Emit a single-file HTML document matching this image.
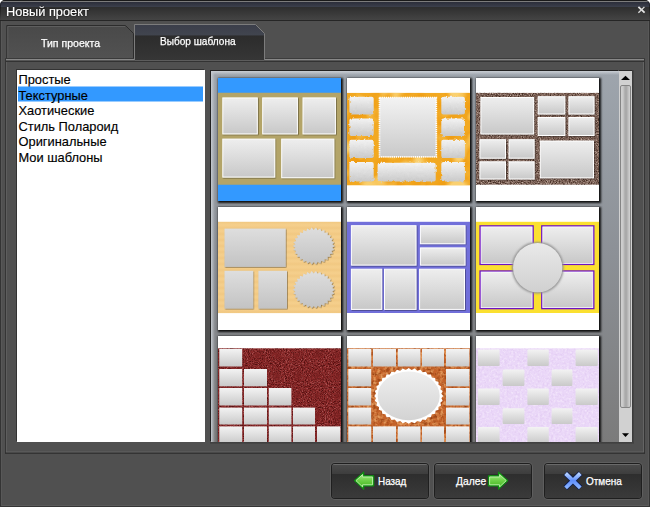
<!DOCTYPE html>
<html><head><meta charset="utf-8">
<style>
html,body{margin:0;padding:0;}
html{background:#fff;}
body{width:650px;height:507px;overflow:hidden;background:#fff;font-family:"Liberation Sans",sans-serif;position:relative;}
#win{position:absolute;left:0;top:0;width:650px;height:507px;overflow:hidden;background:#505050;border-radius:5px 5px 0 0;}
#edge{position:absolute;left:0;top:0;width:648px;height:30px;border:1px solid rgba(0,0,0,.4);border-bottom:none;border-radius:5px 5px 0 0;z-index:9;-webkit-mask-image:linear-gradient(#000 0,#000 6px,transparent 21px);}
.abs{position:absolute;}
#titlebar{left:0;top:0;width:650px;height:21px;background:linear-gradient(#2a2a2a 0,#2a2a2a 1px,#7c7c7c 1px,#7c7c7c 2px,#2b2d39 2px,#3a3e4a 6.5px,#2e2e2e 7px,#444 19.8px,#262626 20px,#262626 21px);}
#title{left:6.3px;top:4px;font-size:13px;color:#fff;-webkit-text-stroke:0.2px #fff;text-shadow:0 0 2px #000,0 0 1px #000;line-height:16px;white-space:nowrap;transform:scaleX(.982);transform-origin:0 0;}
#list{left:17px;top:70px;width:188px;height:372px;background:#fff;box-shadow:-1px -1px 0 0 #333;}
.li{position:absolute;left:1px;width:185px;height:15px;font-size:13px;line-height:15px;color:#000;white-space:nowrap;}
.li span{display:inline-block;transform:translateY(.6px) scaleX(.988);transform-origin:0 0;padding-left:0.5px;-webkit-text-stroke:0.15px #000;}
.sel{background:linear-gradient(rgba(51,153,255,.5) 0,rgba(51,153,255,.5) 1px,#3399ff 1px,#3399ff 15px,rgba(51,153,255,.5) 15px,rgba(51,153,255,.5) 16px);height:16px !important;margin-top:-1px;}
.sel span{margin-top:1px}
#panel{left:211px;top:71px;width:408px;height:371px;background:linear-gradient(#9ea5ad,#8c9096 50%,#7b7b7b);overflow:hidden;box-shadow:-1px -1px 0 0 #222;}
#panel:before{content:"";position:absolute;left:0;top:0;right:0;height:4px;background:linear-gradient(#c9ced4,rgba(201,206,212,0));}
#panel:after{content:"";position:absolute;left:0;top:0;bottom:0;width:4px;background:linear-gradient(90deg,#c4c9cf,rgba(196,201,207,0));}
.th{position:absolute;width:123px;height:123px;background:#fff;box-shadow:1px 1px 2px 1px rgba(0,0,0,.9);z-index:2;}
.th svg{display:block}
.btn{position:absolute;top:464px;height:34px;border-radius:3px;background:linear-gradient(#6a6a6a 0,#6a6a6a 1px,#4a4a4a 1px,#3d3d3d 10px,#2e2e2e 10.5px,#3a3a3a 100%);box-shadow:0 0 0 1px #1f1f1f, 0 0 0 2px #5e5e5e;}
.btn span{position:absolute;top:10px;font-size:11px;line-height:14px;color:#fff;white-space:nowrap;-webkit-text-stroke:0.25px #fff;transform:translateY(.4px) scaleX(.91);transform-origin:0 0;}
.tab{position:absolute;font-size:11px;color:#fff;white-space:nowrap;-webkit-text-stroke:0.25px #fff;}
#sb{left:619px;top:71px;width:13px;height:371px;background:#d1d1d1;box-shadow:0 -1px 0 0 #2a2a2a;}
#sbthumb{left:1px;top:14px;width:9px;height:321px;border:1px solid #858585;background:linear-gradient(90deg,#cfcfcf 0,#cacaca 2px,#aaaaaa 4px,#aaaaaa 5.5px,#c8c8c8 8px,#d2d2d2 9px);border-radius:2px;}
</style></head><body><div id="win">
<div id="titlebar" class="abs"></div>
<div id="title" class="abs">Новый проект</div>
<svg class="abs" style="left:0;top:0" width="650" height="507" viewBox="0 0 650 507">
<defs>
<linearGradient id="t1" x1="0" y1="0" x2="0" y2="1"><stop offset="0" stop-color="#494949"/><stop offset="1" stop-color="#525252"/></linearGradient>
<linearGradient id="t2" x1="0" y1="0" x2="0" y2="1"><stop offset="0" stop-color="#3b3e4a"/><stop offset="0.30" stop-color="#41454f"/><stop offset="0.31" stop-color="#2c2c2c"/><stop offset="1" stop-color="#363636"/></linearGradient>
</defs>
<!-- close x -->
<path d="M638.4 6.9 L644.6 12.7" stroke="#e6e6e6" stroke-width="1.8" fill="none"/><path d="M644.4 6.9 L638.4 12.7" stroke="#dcdcdc" stroke-width="1.3" fill="none"/>
<!-- window edges -->
<rect x="0" y="21" width="1" height="486" fill="#343434"/>
<rect x="1" y="21" width="1" height="485" fill="#585858"/>
<rect x="649" y="21" width="1" height="486" fill="#333"/>
<rect x="648" y="21" width="1" height="485" fill="#585858"/>
<rect x="0" y="506" width="650" height="1" fill="#353535"/>
<rect x="2" y="505" width="646" height="1" fill="#5a5a5a"/>
<!-- tab1 -->
<path d="M6.8 59 V25.5 H125.5 L133.5 33.5 V59 Z" fill="url(#t1)" stroke="#2c2c2c" stroke-width="1"/>
<path d="M7.8 58 V26.5 H125" fill="none" stroke="#5e5e5e" stroke-width="1"/>
<!-- tab2 -->
<path d="M134.5 60.5 V24.5 H255.5 L264.5 33.5 V60.5 Z" fill="url(#t2)" stroke="#7c7c7c" stroke-width="1"/>
<!-- frame -->
<rect x="5" y="58" width="129" height="1" fill="#3a3a3a"/>
<rect x="265" y="58" width="380" height="1" fill="#3c3c3c"/>
<rect x="6" y="59" width="128" height="1.6" fill="#888"/>
<rect x="265" y="59" width="379.4" height="1.6" fill="#888"/>
<rect x="5" y="60.6" width="640" height="1.3" fill="#303030"/>
<rect x="5" y="59" width="1" height="394.5" fill="#353535"/>
<rect x="6" y="62" width="1" height="390" fill="#5e5e5e"/>
<rect x="643" y="62" width="1" height="390" fill="#646464"/>
<rect x="644" y="59" width="1" height="394.5" fill="#353535"/>
<rect x="6" y="451.6" width="638" height="1" fill="#666"/>
<rect x="5" y="452.6" width="640" height="1.2" fill="#2e2e2e"/>
</svg>
<div class="tab" id="tab1t" style="left:41px;top:36px;line-height:14px;transform:scaleX(.957);transform-origin:0 0;">Тип проекта</div>
<div class="tab" id="tab2t" style="left:160px;top:34px;line-height:14px;transform:scaleX(.917);transform-origin:0 0;">Выбор шаблона</div>

<div id="list" class="abs">
<div class="li" style="top:1px"><span>Простые</span></div>
<div class="li sel" style="top:17px"><span>Текстурные</span></div>
<div class="li" style="top:32px"><span>Хаотические</span></div>
<div class="li" style="top:48px"><span>Стиль Полароид</span></div>
<div class="li" style="top:63px"><span>Оригинальные</span></div>
<div class="li" style="top:79px"><span>Мои шаблоны</span></div>
</div>

<svg width="0" height="0" style="position:absolute"><defs>
<linearGradient id="cg" x1="0" y1="0" x2="0" y2="1"><stop offset="0" stop-color="#eeeeee"/><stop offset="1" stop-color="#c8c8c8"/></linearGradient>
<linearGradient id="kg" x1="0" y1="0" x2="0" y2="1"><stop offset="0" stop-color="#f3f3f3"/><stop offset="1" stop-color="#c9c9c9"/></linearGradient>
<linearGradient id="gg" x1="0" y1="0" x2="0" y2="1"><stop offset="0" stop-color="#dedede"/><stop offset="1" stop-color="#c3c3c3"/></linearGradient>
<linearGradient id="eg" x1="0" y1="0" x2="0" y2="1"><stop offset="0" stop-color="#efefef"/><stop offset="1" stop-color="#d3d3d3"/></linearGradient>
<linearGradient id="gg2" x1="0" y1="0" x2="0" y2="1"><stop offset="0" stop-color="#e9e9e9"/><stop offset="1" stop-color="#d0d0d0"/></linearGradient>
<radialGradient id="og" cx="0.5" cy="0.5" r="0.7"><stop offset="0" stop-color="#fbd27a" stop-opacity=".55"/><stop offset="1" stop-color="#f1a51e" stop-opacity="0"/></radialGradient>
<filter id="cs" x="-10%" y="-10%" width="125%" height="125%"><feDropShadow dx="0.7" dy="0.7" stdDeviation="0.6" flood-color="#000" flood-opacity=".45"/></filter>
<filter id="b1"><feGaussianBlur stdDeviation="0.8"/></filter>
<filter id="speck" color-interpolation-filters="sRGB" x="0" y="0" width="100%" height="100%"><feTurbulence type="fractalNoise" baseFrequency="0.9" numOctaves="2" seed="3" result="n"/><feColorMatrix in="n" type="matrix" values="0 0 0 0 0.235  0 0 0 0 0.149  0 0 0 0 0.110  3 0 0 0 -1.3" result="d"/><feColorMatrix in="n" type="matrix" values="0 0 0 0 0.769  0 0 0 0 0.690  0 0 0 0 0.643  0 3 0 0 -1.5" result="l"/><feMerge result="m"><feMergeNode in="SourceGraphic"/><feMergeNode in="d"/><feMergeNode in="l"/></feMerge><feComposite in="m" in2="SourceGraphic" operator="in"/></filter>
<filter id="speck2" color-interpolation-filters="sRGB" x="0" y="0" width="100%" height="100%"><feTurbulence type="fractalNoise" baseFrequency="0.95" numOctaves="2" seed="11" result="n"/><feColorMatrix in="n" type="matrix" values="0 0 0 0 0.306  0 0 0 0 0.055  0 0 0 0 0.055  3 0 0 0 -1.3" result="d"/><feColorMatrix in="n" type="matrix" values="0 0 0 0 0.706  0 0 0 0 0.353  0 0 0 0 0.353  0 3 0 0 -1.55" result="l"/><feMerge result="m"><feMergeNode in="SourceGraphic"/><feMergeNode in="d"/><feMergeNode in="l"/></feMerge><feComposite in="m" in2="SourceGraphic" operator="in"/></filter>
<filter id="speck3" color-interpolation-filters="sRGB" x="0" y="0" width="100%" height="100%"><feTurbulence type="fractalNoise" baseFrequency="0.3" numOctaves="2" seed="5" result="n"/><feColorMatrix in="n" type="matrix" values="0 0 0 0 0.604  0 0 0 0 0.267  0 0 0 0 0.078  3 0 0 0 -1.3" result="d"/><feColorMatrix in="n" type="matrix" values="0 0 0 0 0.890  0 0 0 0 0.604  0 0 0 0 0.361  0 3 0 0 -1.3" result="l"/><feMerge result="m"><feMergeNode in="SourceGraphic"/><feMergeNode in="d"/><feMergeNode in="l"/></feMerge><feComposite in="m" in2="SourceGraphic" operator="in"/></filter>
<filter id="speck4" color-interpolation-filters="sRGB" x="0" y="0" width="100%" height="100%"><feTurbulence type="fractalNoise" baseFrequency="0.45" numOctaves="2" seed="2" result="n"/><feColorMatrix in="n" type="matrix" values="0 0 0 0 0.886  0 0 0 0 0.796  0 0 0 0 0.949  2.5 0 0 0 -1.15" result="d"/><feColorMatrix in="n" type="matrix" values="0 0 0 0 0.953  0 0 0 0 0.902  0 0 0 0 0.984  0 2.5 0 0 -1.15" result="l"/><feMerge result="m"><feMergeNode in="SourceGraphic"/><feMergeNode in="d"/><feMergeNode in="l"/></feMerge><feComposite in="m" in2="SourceGraphic" operator="in"/></filter>
<filter id="blot" color-interpolation-filters="sRGB" x="0" y="0" width="100%" height="100%"><feTurbulence type="fractalNoise" baseFrequency="0.05" numOctaves="2" seed="7" result="n"/><feColorMatrix in="n" type="matrix" values="0 0 0 0 0.933  0 0 0 0 0.588  0 0 0 0 0.039  2.6 0 0 0 -1.1" result="d"/><feColorMatrix in="n" type="matrix" values="0 0 0 0 0.980  0 0 0 0 0.816  0 0 0 0 0.439  0 4 0 0 -2.0" result="l"/><feMerge result="m"><feMergeNode in="SourceGraphic"/><feMergeNode in="d"/><feMergeNode in="l"/></feMerge><feComposite in="m" in2="SourceGraphic" operator="in"/></filter>
<filter id="b05"><feGaussianBlur stdDeviation="0.35"/></filter>
<linearGradient id="wood" x1="0" y1="0" x2="0" y2="6" gradientUnits="userSpaceOnUse" spreadMethod="repeat"><stop offset="0" stop-color="#e9b96a" stop-opacity=".0"/><stop offset="0.5" stop-color="#e2ad5c" stop-opacity=".22"/><stop offset="1" stop-color="#e9b96a" stop-opacity="0"/></linearGradient>
<filter id="rough" x="-10%" y="-10%" width="120%" height="120%"><feTurbulence type="fractalNoise" baseFrequency="0.35" numOctaves="2" seed="4" result="n"/><feDisplacementMap in="SourceGraphic" in2="n" scale="3" xChannelSelector="R" yChannelSelector="G"/></filter>
<filter id="rough2" x="-10%" y="-10%" width="125%" height="125%"><feTurbulence type="fractalNoise" baseFrequency="0.3" numOctaves="2" seed="9" result="n"/><feDisplacementMap in="SourceGraphic" in2="n" scale="2.2" xChannelSelector="R" yChannelSelector="G" result="d"/><feDropShadow in="d" dx="0.8" dy="0.8" stdDeviation="0.6" flood-color="#000" flood-opacity=".6"/></filter>
</defs></svg>
<div id="panel" class="abs">
<div class="th" style="left:7px;top:7px"><svg width="123" height="123" viewBox="0 0 123 123"><rect width="123" height="123" fill="#3399ff"/><rect x="0" y="14.75" width="123" height="92" fill="#b3a468"/><rect x="4.8" y="19.9" width="34.5" height="36.0" fill="url(#cg)" stroke="#fff" stroke-width="1" filter="url(#cs)" /><rect x="44.7" y="19.9" width="34.7" height="36.0" fill="url(#cg)" stroke="#fff" stroke-width="1" filter="url(#cs)" /><rect x="85.0" y="19.9" width="32.4" height="36.0" fill="url(#cg)" stroke="#fff" stroke-width="1" filter="url(#cs)" /><rect x="4.8" y="61.1" width="51.9" height="38.0" fill="url(#cg)" stroke="#fff" stroke-width="1" filter="url(#cs)" /><rect x="63.7" y="61.1" width="52.1" height="38.6" fill="url(#cg)" stroke="#fff" stroke-width="1" filter="url(#cs)" /></svg></div>
<div class="th" style="left:136px;top:7px"><svg width="123" height="123" viewBox="0 0 123 123"><rect width="123" height="123" fill="#fff"/><rect x="0" y="14.75" width="123" height="92.75" fill="#f2a922" filter="url(#blot)"/><rect x="2.4" y="18.8" width="24.3" height="17.8" fill="url(#kg)" rx="2" filter="url(#rough)"/><rect x="94.3" y="18.8" width="23.6" height="17.8" fill="url(#kg)" rx="2" filter="url(#rough)"/><rect x="2.4" y="40.4" width="24.3" height="17.6" fill="url(#kg)" rx="2" filter="url(#rough)"/><rect x="94.3" y="40.4" width="23.6" height="17.6" fill="url(#kg)" rx="2" filter="url(#rough)"/><rect x="2.4" y="61.8" width="24.3" height="18.3" fill="url(#kg)" rx="2" filter="url(#rough)"/><rect x="94.3" y="61.8" width="23.6" height="18.3" fill="url(#kg)" rx="2" filter="url(#rough)"/><rect x="2.4" y="83.9" width="24.3" height="19.7" fill="url(#kg)" rx="2" filter="url(#rough)"/><rect x="94.3" y="83.9" width="23.6" height="19.7" fill="url(#kg)" rx="2" filter="url(#rough)"/><rect x="30.6" y="84.7" width="58.1" height="18.9" fill="url(#kg)" rx="2" filter="url(#rough)"/><rect x="32.5" y="19.5" width="56.8" height="59.4" fill="url(#kg)" stroke="#fff" stroke-width="1.7" stroke-dasharray="1.3 0.8"/></svg></div>
<div class="th" style="left:265px;top:7px"><svg width="123" height="123" viewBox="0 0 123 123"><rect width="123" height="123" fill="#fff"/><rect x="0" y="14.8" width="123" height="92" fill="#80655a" filter="url(#speck)"/><rect x="4.9" y="19.5" width="52.7" height="36.5" fill="url(#cg)" stroke="#fff" stroke-width="1" filter="url(#cs)" /><rect x="62.2" y="18.7" width="26.6" height="17.3" fill="url(#cg)" stroke="#fff" stroke-width="1" filter="url(#cs)" /><rect x="92.9" y="18.7" width="25.1" height="17.3" fill="url(#cg)" stroke="#fff" stroke-width="1" filter="url(#cs)" /><rect x="62.2" y="39.5" width="26.6" height="18.0" fill="url(#cg)" stroke="#fff" stroke-width="1" filter="url(#cs)" /><rect x="92.9" y="39.5" width="25.1" height="18.0" fill="url(#cg)" stroke="#fff" stroke-width="1" filter="url(#cs)" /><rect x="3.9" y="61.7" width="25.6" height="18.5" fill="url(#cg)" stroke="#fff" stroke-width="1" filter="url(#cs)" /><rect x="33.0" y="61.7" width="25.1" height="18.5" fill="url(#cg)" stroke="#fff" stroke-width="1" filter="url(#cs)" /><rect x="3.9" y="83.8" width="25.6" height="17.2" fill="url(#cg)" stroke="#fff" stroke-width="1" filter="url(#cs)" /><rect x="33.0" y="83.8" width="25.1" height="17.2" fill="url(#cg)" stroke="#fff" stroke-width="1" filter="url(#cs)" /><rect x="64.3" y="63.0" width="53.2" height="36.8" fill="url(#cg)" stroke="#fff" stroke-width="1" filter="url(#cs)" /></svg></div>
<div class="th" style="left:7px;top:136px"><svg width="123" height="123" viewBox="0 0 123 123"><rect width="123" height="123" fill="#fff"/><rect x="0" y="14.8" width="123" height="91.3" fill="#f5cf8c"/><rect x="0" y="14.8" width="123" height="91.3" fill="url(#wood)"/><rect x="6.5" y="21.6" width="61.2" height="38.3" fill="url(#gg)" filter="url(#cs)" filter="url(#rough2)"/><rect x="6.5" y="63.8" width="28.7" height="37.8" fill="url(#gg)" filter="url(#cs)" filter="url(#rough2)"/><rect x="40.4" y="63.8" width="28.6" height="37.8" fill="url(#gg)" filter="url(#cs)" filter="url(#rough2)"/><polygon points="116.70,39.00 114.20,40.68 116.24,42.85 113.39,43.98 114.89,46.52 111.82,47.05 112.71,49.87 109.55,49.77 109.78,52.75 106.67,52.03 106.25,55.02 103.32,53.71 102.26,56.59 99.65,54.75 97.98,57.40 95.80,55.10 93.62,57.40 91.95,54.75 89.34,56.59 88.28,53.71 85.35,55.02 84.93,52.03 81.82,52.75 82.05,49.77 78.89,49.87 79.78,47.05 76.71,46.52 78.21,43.98 75.36,42.85 77.40,40.68 74.90,39.00 77.40,37.32 75.36,35.15 78.21,34.02 76.71,31.48 79.78,30.95 78.89,28.13 82.05,28.23 81.82,25.25 84.93,25.97 85.35,22.98 88.28,24.29 89.34,21.41 91.95,23.25 93.62,20.60 95.80,22.90 97.98,20.60 99.65,23.25 102.26,21.41 103.32,24.29 106.25,22.98 106.67,25.97 109.78,25.25 109.55,28.23 112.71,28.13 111.82,30.95 114.89,31.48 113.39,34.02 116.24,35.15 114.20,37.32" fill="url(#gg)" filter="url(#cs)"/><polygon points="116.70,82.70 114.20,84.40 116.24,86.59 113.39,87.74 114.89,90.31 111.82,90.85 112.71,93.69 109.55,93.61 109.78,96.60 106.67,95.89 106.25,98.89 103.32,97.59 102.26,100.48 99.65,98.64 97.98,101.30 95.80,99.00 93.62,101.30 91.95,98.64 89.34,100.48 88.28,97.59 85.35,98.89 84.93,95.89 81.82,96.60 82.05,93.61 78.89,93.69 79.78,90.85 76.71,90.31 78.21,87.74 75.36,86.59 77.40,84.40 74.90,82.70 77.40,81.00 75.36,78.81 78.21,77.66 76.71,75.09 79.78,74.55 78.89,71.71 82.05,71.79 81.82,68.80 84.93,69.51 85.35,66.51 88.28,67.81 89.34,64.92 91.95,66.76 93.62,64.10 95.80,66.40 97.98,64.10 99.65,66.76 102.26,64.92 103.32,67.81 106.25,66.51 106.67,69.51 109.78,68.80 109.55,71.79 112.71,71.71 111.82,74.55 114.89,75.09 113.39,77.66 116.24,78.81 114.20,81.00" fill="url(#gg)" filter="url(#cs)"/></svg></div>
<div class="th" style="left:136px;top:136px"><svg width="123" height="123" viewBox="0 0 123 123"><rect width="123" height="123" fill="#fff"/><rect x="0" y="14.8" width="123" height="91.2" fill="#716fda"/><rect x="4.4" y="18.7" width="64.6" height="39.4" fill="url(#cg)" stroke="#fff" stroke-width="1" filter="url(#cs)" /><rect x="73.4" y="18.7" width="44.6" height="18.0" fill="url(#cg)" stroke="#fff" stroke-width="1" filter="url(#cs)" /><rect x="73.4" y="40.9" width="44.6" height="17.2" fill="url(#cg)" stroke="#fff" stroke-width="1" filter="url(#cs)" /><rect x="4.4" y="62.2" width="30.3" height="40.2" fill="url(#cg)" stroke="#fff" stroke-width="1" filter="url(#cs)" /><rect x="37.5" y="62.2" width="31.5" height="40.2" fill="url(#cg)" stroke="#fff" stroke-width="1" filter="url(#cs)" /><rect x="72.6" y="62.2" width="44.9" height="40.2" fill="url(#cg)" stroke="#fff" stroke-width="1" filter="url(#cs)" /></svg></div>
<div class="th" style="left:265px;top:136px"><svg width="123" height="123" viewBox="0 0 123 123"><rect width="123" height="123" fill="#fff"/><rect x="0" y="14.8" width="123" height="91.2" fill="#fbe030"/><rect x="3.4" y="18.2" width="54.4" height="39.9" fill="#6d14c2"/><rect x="5.1" y="19.9" width="51.0" height="36.5" fill="url(#cg)" stroke="#fff" stroke-width="0.8"/><rect x="65.1" y="18.2" width="53.4" height="39.9" fill="#6d14c2"/><rect x="66.8" y="19.9" width="50.0" height="36.5" fill="url(#cg)" stroke="#fff" stroke-width="0.8"/><rect x="3.4" y="63.3" width="54.4" height="39.0" fill="#6d14c2"/><rect x="5.1" y="65.0" width="51.0" height="35.6" fill="url(#cg)" stroke="#fff" stroke-width="0.8"/><rect x="65.1" y="63.3" width="53.4" height="39.0" fill="#6d14c2"/><rect x="66.8" y="65.0" width="50.0" height="35.6" fill="url(#cg)" stroke="#fff" stroke-width="0.8"/><circle cx="61.7" cy="60.7" r="25.8" fill="#909090" filter="url(#b1)"/><circle cx="61.7" cy="60.7" r="24.6" fill="url(#gg2)" filter="url(#b05)"/></svg></div>
<div class="th" style="left:7px;top:265px"><svg width="123" height="123" viewBox="0 0 123 123"><rect width="123" height="123" fill="#fff"/><rect x="0" y="12.2" width="123" height="111" fill="#882727" filter="url(#speck2)"/><rect x="1.3" y="13.0" width="22.9" height="17.5" fill="url(#kg)" /><rect x="1.3" y="33.0" width="22.9" height="17.3" fill="url(#kg)" /><rect x="26.0" y="33.0" width="23.0" height="17.3" fill="url(#kg)" /><rect x="1.3" y="52.0" width="22.9" height="17.5" fill="url(#kg)" /><rect x="26.0" y="52.0" width="23.0" height="17.5" fill="url(#kg)" /><rect x="50.8" y="52.0" width="22.6" height="17.5" fill="url(#kg)" /><rect x="1.3" y="71.6" width="22.9" height="16.9" fill="url(#kg)" /><rect x="26.0" y="71.6" width="23.0" height="16.9" fill="url(#kg)" /><rect x="50.8" y="71.6" width="22.6" height="16.9" fill="url(#kg)" /><rect x="75.0" y="71.6" width="22.0" height="16.9" fill="url(#kg)" /><rect x="1.3" y="90.4" width="22.9" height="17.3" fill="url(#kg)" /><rect x="26.0" y="90.4" width="23.0" height="17.3" fill="url(#kg)" /><rect x="50.8" y="90.4" width="22.6" height="17.3" fill="url(#kg)" /><rect x="75.0" y="90.4" width="22.0" height="17.3" fill="url(#kg)" /><rect x="99.0" y="90.4" width="23.4" height="17.3" fill="url(#kg)" /></svg></div>
<div class="th" style="left:136px;top:265px"><svg width="123" height="123" viewBox="0 0 123 123"><rect width="123" height="123" fill="#fff"/><rect x="0" y="12.2" width="123" height="111" fill="#c5632a" filter="url(#speck3)"/><rect x="1.3" y="13.0" width="22.9" height="17.5" fill="url(#kg)" /><rect x="26.0" y="13.0" width="23.0" height="17.5" fill="url(#kg)" /><rect x="50.8" y="13.0" width="22.6" height="17.5" fill="url(#kg)" /><rect x="75.0" y="13.0" width="22.0" height="17.5" fill="url(#kg)" /><rect x="99.0" y="13.0" width="23.4" height="17.5" fill="url(#kg)" /><rect x="1.3" y="33.0" width="22.9" height="17.3" fill="url(#kg)" /><rect x="99.0" y="33.0" width="23.4" height="17.3" fill="url(#kg)" /><rect x="1.3" y="52.0" width="22.9" height="17.5" fill="url(#kg)" /><rect x="99.0" y="52.0" width="23.4" height="17.5" fill="url(#kg)" /><rect x="1.3" y="71.6" width="22.9" height="16.9" fill="url(#kg)" /><rect x="99.0" y="71.6" width="23.4" height="16.9" fill="url(#kg)" /><rect x="1.3" y="90.4" width="22.9" height="17.3" fill="url(#kg)" /><rect x="26.0" y="90.4" width="23.0" height="17.3" fill="url(#kg)" /><rect x="50.8" y="90.4" width="22.6" height="17.3" fill="url(#kg)" /><rect x="75.0" y="90.4" width="22.0" height="17.3" fill="url(#kg)" /><rect x="99.0" y="90.4" width="23.4" height="17.3" fill="url(#kg)" /><polygon points="96.20,59.90 94.38,62.17 95.68,64.73 93.38,66.66 94.12,69.41 91.43,70.93 91.58,73.80 88.57,74.87 88.13,77.77 84.89,78.36 83.88,81.20 80.51,81.28 78.95,83.98 75.56,83.55 73.50,86.02 70.19,85.11 67.69,87.28 64.56,85.90 61.70,87.70 58.84,85.90 55.71,87.28 53.21,85.11 49.90,86.02 47.84,83.55 44.45,83.98 42.89,81.28 39.52,81.20 38.51,78.36 35.27,77.77 34.83,74.87 31.82,73.80 31.97,70.93 29.28,69.41 30.02,66.66 27.72,64.73 29.02,62.17 27.20,59.90 29.02,57.63 27.72,55.07 30.02,53.14 29.28,50.39 31.97,48.87 31.82,46.00 34.83,44.93 35.27,42.03 38.51,41.44 39.52,38.60 42.89,38.52 44.45,35.82 47.84,36.25 49.90,33.78 53.21,34.69 55.71,32.52 58.84,33.90 61.70,32.10 64.56,33.90 67.69,32.52 70.19,34.69 73.50,33.78 75.56,36.25 78.95,35.82 80.51,38.52 83.88,38.60 84.89,41.44 88.13,42.03 88.57,44.93 91.58,46.00 91.43,48.87 94.12,50.39 93.38,53.14 95.68,55.07 94.38,57.63" fill="#fff" /><ellipse cx="61.7" cy="59.9" rx="31" ry="24.3" fill="url(#eg)"/></svg></div>
<div class="th" style="left:265px;top:265px"><svg width="123" height="123" viewBox="0 0 123 123"><rect width="123" height="123" fill="#fff"/><rect x="0" y="12.2" width="123" height="111" fill="#ead7f8" filter="url(#speck4)"/><rect x="1.9" y="13.6" width="21.7" height="16.5" fill="url(#kg)" rx="1" filter="url(#b05)"/><rect x="51.4" y="13.6" width="21.4" height="16.5" fill="url(#kg)" rx="1" filter="url(#b05)"/><rect x="99.6" y="13.6" width="22.2" height="16.5" fill="url(#kg)" rx="1" filter="url(#b05)"/><rect x="26.6" y="33.6" width="21.8" height="16.3" fill="url(#kg)" rx="1" filter="url(#b05)"/><rect x="75.6" y="33.6" width="20.8" height="16.3" fill="url(#kg)" rx="1" filter="url(#b05)"/><rect x="1.9" y="52.6" width="21.7" height="16.5" fill="url(#kg)" rx="1" filter="url(#b05)"/><rect x="51.4" y="52.6" width="21.4" height="16.5" fill="url(#kg)" rx="1" filter="url(#b05)"/><rect x="99.6" y="52.6" width="22.2" height="16.5" fill="url(#kg)" rx="1" filter="url(#b05)"/><rect x="26.6" y="72.2" width="21.8" height="15.9" fill="url(#kg)" rx="1" filter="url(#b05)"/><rect x="75.6" y="72.2" width="20.8" height="15.9" fill="url(#kg)" rx="1" filter="url(#b05)"/><rect x="1.9" y="91.0" width="21.7" height="16.3" fill="url(#kg)" rx="1" filter="url(#b05)"/><rect x="51.4" y="91.0" width="21.4" height="16.3" fill="url(#kg)" rx="1" filter="url(#b05)"/><rect x="99.6" y="91.0" width="22.2" height="16.3" fill="url(#kg)" rx="1" filter="url(#b05)"/></svg></div>
</div>
<div id="sb" class="abs">
<div id="sbthumb" class="abs"></div>
<svg class="abs" style="left:0;top:0" width="13" height="371"><path d="M2 9 L6.5 4.8 L11 9 Z" fill="#000"/><path d="M3 362.3 L10 362.3 L6.5 366 Z" fill="#000"/></svg>
</div>
<div class="abs" style="left:632px;top:70px;width:2px;height:374px;background:linear-gradient(90deg,#383838,#474747)"></div>
<div class="abs" style="left:210px;top:442px;width:424px;height:2px;background:linear-gradient(#3e3e3e,#484848)"></div>

<div class="btn" style="left:332px;width:96px"><span style="left:45.5px;transform:translateY(.4px) scaleX(.9)">Назад</span></div>
<div class="btn" style="left:435px;width:96px"><span style="left:20.5px;transform:translateY(.4px) scaleX(.935)">Далее</span></div>
<div class="btn" style="left:545px;width:96px"><span style="left:41px">Отмена</span></div>
<svg class="abs" style="left:0;top:455px" width="650" height="52" viewBox="0 455 650 52">
<defs>
<linearGradient id="gr" x1="0" y1="0" x2="0" y2="1"><stop offset="0" stop-color="#a5ea86"/><stop offset="0.45" stop-color="#6fd24a"/><stop offset="1" stop-color="#45b822"/></linearGradient>
<linearGradient id="bl" x1="0" y1="0" x2="0" y2="1"><stop offset="0" stop-color="#b4d0ff"/><stop offset="0.5" stop-color="#5f8ffc"/><stop offset="1" stop-color="#8ab4ff"/></linearGradient>
</defs>
<g id="arrL">
<path d="M354.1 480.6 L363.8 471.8 L363.8 475.7 L373.8 475.7 L373.8 486 L363.8 486 L363.8 489.6 Z" fill="#0f8f10" stroke="#0f8f10" stroke-width="1" stroke-linejoin="round"/>
<path d="M355.9 480.6 L362.6 474.5 L362.6 476.9 L372.6 476.9 L372.6 484.8 L362.6 484.8 L362.6 486.9 Z" fill="url(#gr)" stroke="#c9f7b6" stroke-width="0.9" stroke-linejoin="miter"/>
</g>
<g transform="translate(862.2 0) scale(-1 1)">
<path d="M354.1 480.6 L363.8 471.8 L363.8 475.7 L373.8 475.7 L373.8 486 L363.8 486 L363.8 489.6 Z" fill="#0f8f10" stroke="#0f8f10" stroke-width="1" stroke-linejoin="round"/>
<path d="M355.9 480.6 L362.6 474.5 L362.6 476.9 L372.6 476.9 L372.6 484.8 L362.6 484.8 L362.6 486.9 Z" fill="url(#gr)" stroke="#c9f7b6" stroke-width="0.9" stroke-linejoin="miter"/>
</g>
<g>
<path d="M565.4 473.3 L580.5 488 M580.5 473.3 L565.4 488" stroke="#0b1b4d" stroke-width="5.4" fill="none"/>
<path d="M565.6 473.5 L580.3 487.8 M580.3 473.5 L565.6 487.8" stroke="url(#bl)" stroke-width="3.9" fill="none"/>
</g>
</svg>
<div id="edge"></div></div></body></html>
